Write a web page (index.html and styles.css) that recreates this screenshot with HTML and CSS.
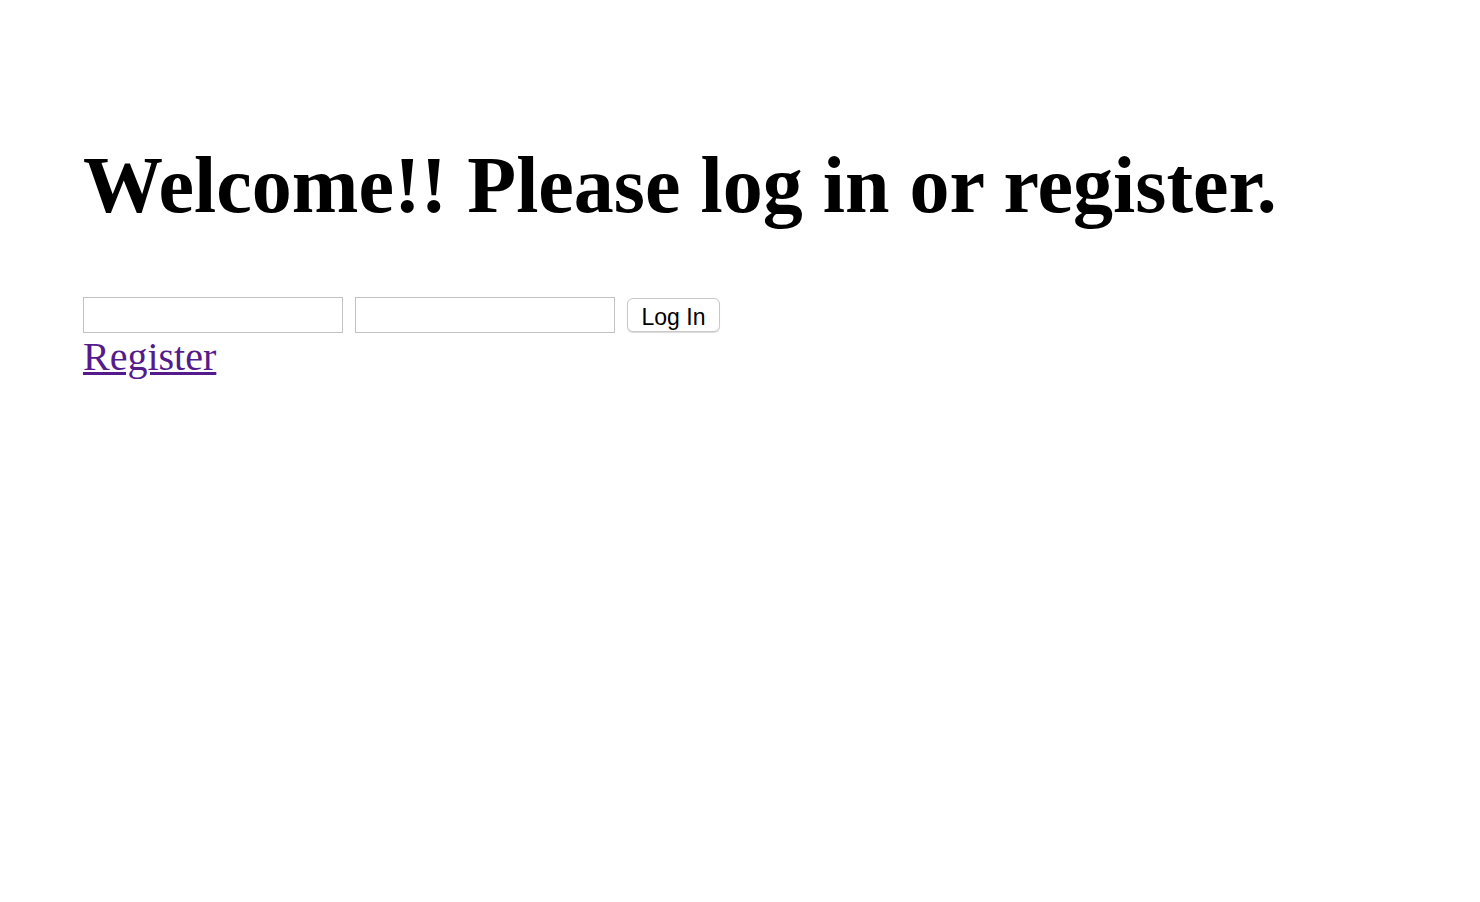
FILE: index.html
```html
<!DOCTYPE html>
<html>
<head>
<meta charset="utf-8">
<link rel="stylesheet" href="styles.css">
</head>
<body>
<div class="page">
  <h1 class="title">Welcome!! Please log in or register.</h1>
  <form class="login">
    <input class="field" type="text">
    <input class="field" type="password">
    <button class="btn" type="button">Log In</button>
  </form>
  <a class="reg" href="#">Register</a>
</div>
</body>
</html>
```
FILE: styles.css
```css
html, body { margin: 0; padding: 0; background: #fff; }
.page {
  padding: 80px 83px;
  font-family: "Liberation Serif", "Times New Roman", serif;
  font-size: 40px;
  color: #000;
}
.title {
  font-size: 80px;
  font-weight: bold;
  margin: 59px 0 66px;
  line-height: 92px;
}
.login {
  display: flex;
  align-items: center;
  gap: 12px;
  margin: 0;
  height: 36px;
}
.field {
  box-sizing: border-box;
  width: 260px;
  height: 36px;
  border: 1px solid #c2c2c2;
  margin: 0;
  padding: 0 6px;
  font-size: 20px;
  background: #fff;
}
.btn {
  box-sizing: border-box;
  width: 93px;
  height: 34px;
  margin: 0;
  padding: 3px 0 0;
  border: 1px solid #c8c8c8;
  border-radius: 6px;
  background: #fff;
  box-shadow: 0 1px 1px rgba(0,0,0,0.15);
  font-family: "Liberation Sans", Arial, sans-serif;
  font-size: 23px;
  line-height: 26px;
  color: #000;
}
.reg {
  display: block;
  width: max-content;
  color: #551a8b;
  text-decoration: underline;
  text-decoration-thickness: 3px;
  line-height: 47px;
}
```
